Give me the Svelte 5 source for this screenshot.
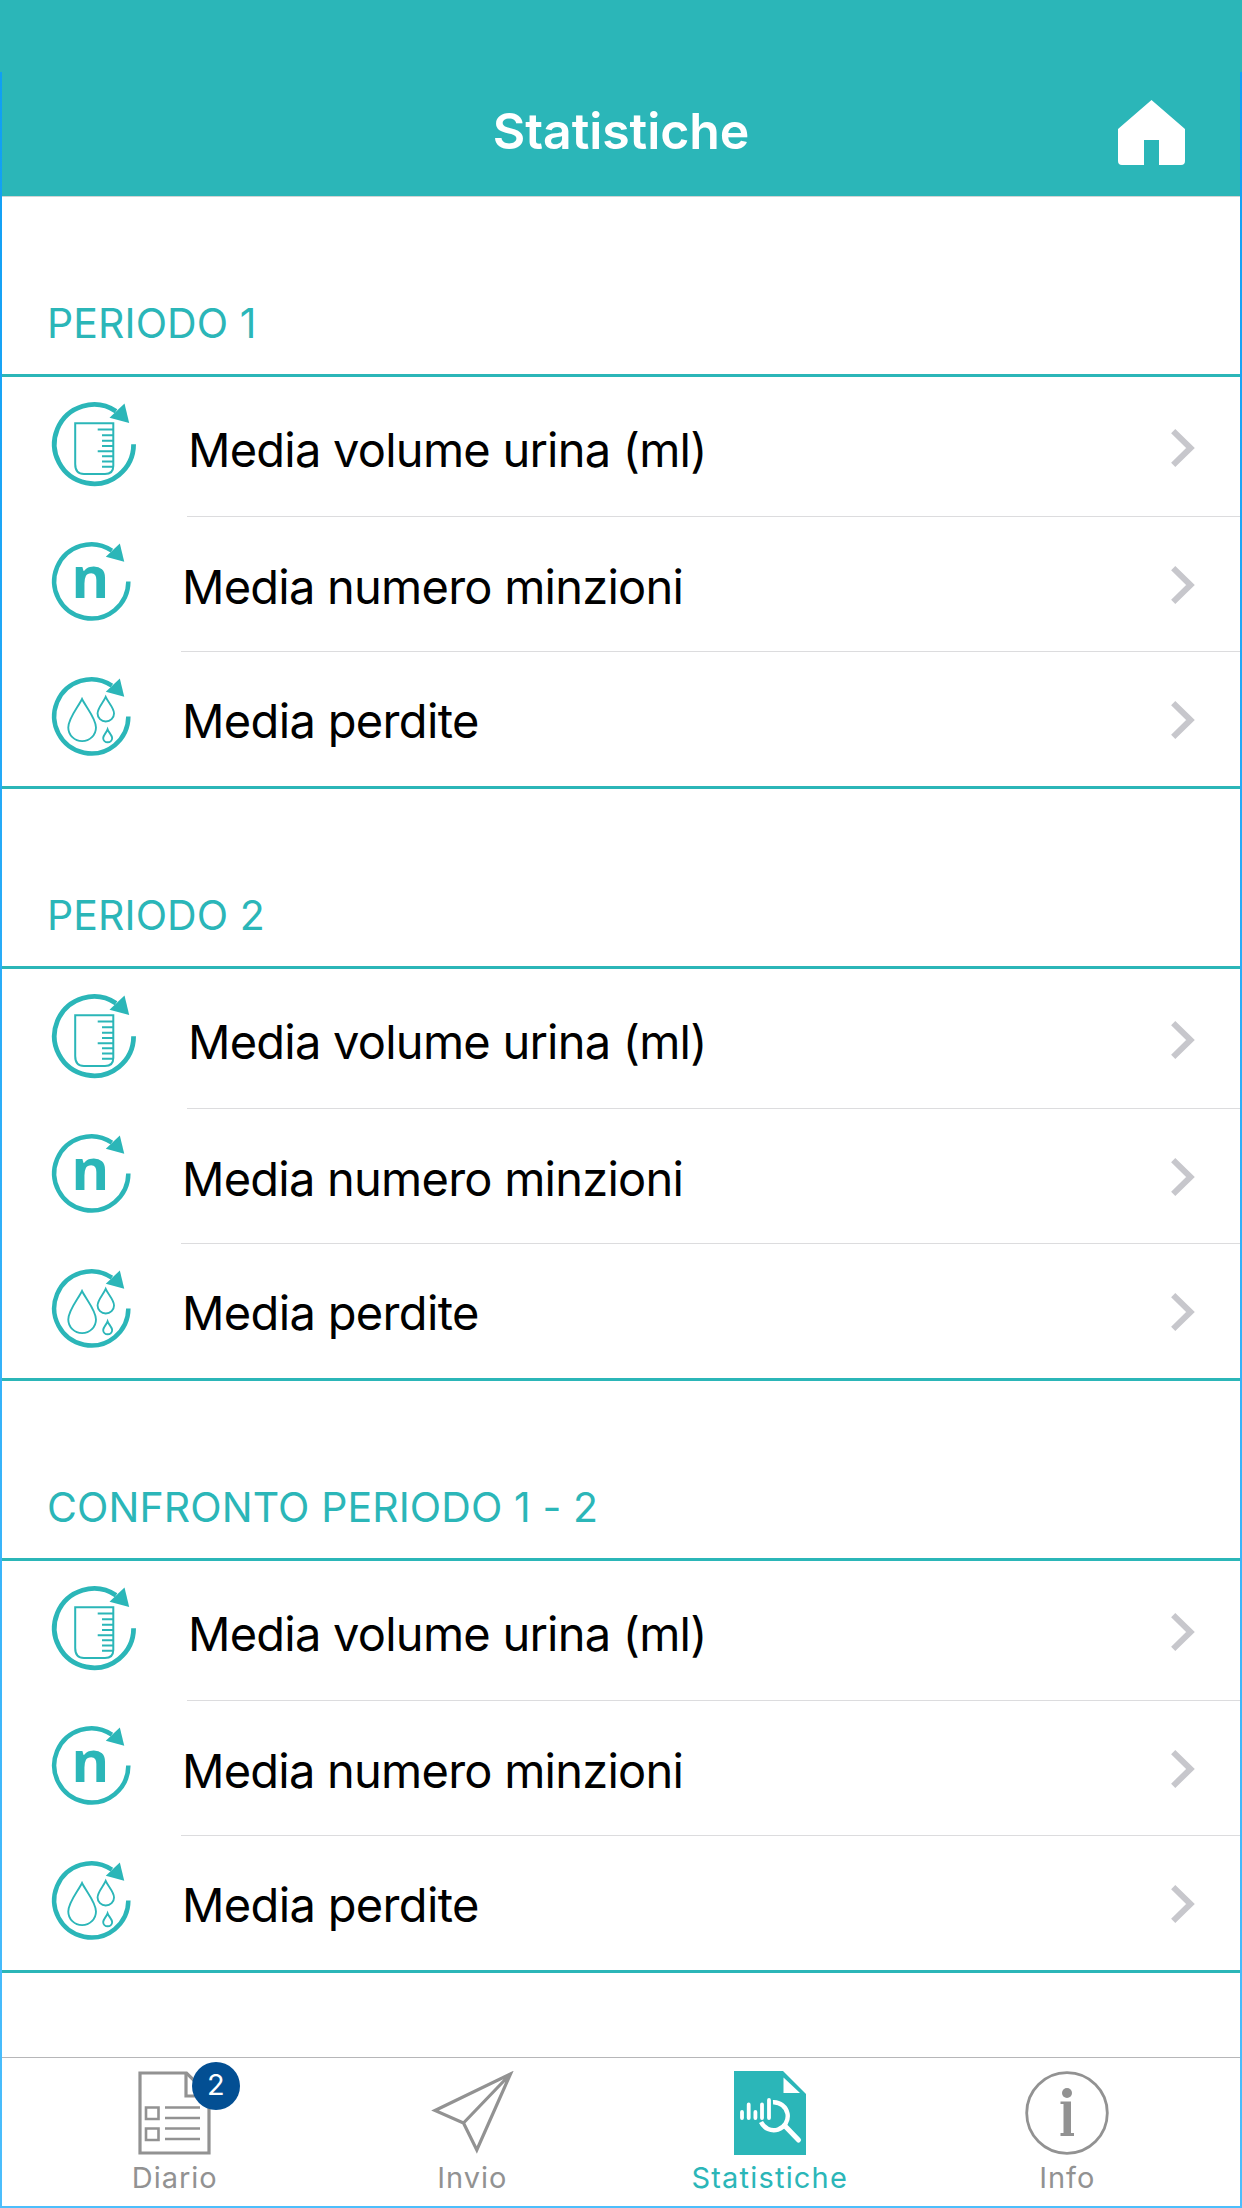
<script>
  const rows = [
    { icon: 'volume', label: 'Media volume urina (ml)' },
    { icon: 'number', label: 'Media numero minzioni' },
    { icon: 'drops', label: 'Media perdite' }
  ];

  const sections = ['PERIODO 1', 'PERIODO 2', 'CONFRONTO PERIODO 1 - 2'];

  const tabs = [
    { value: 'diario', label: 'Diario', badge: 2 },
    { value: 'invio', label: 'Invio' },
    { value: 'statistiche', label: 'Statistiche' },
    { value: 'info', label: 'Info' }
  ];

  let activeTab = $state('statistiche');
</script>

<div class="screen">
  <header>
    <h1>Statistiche</h1>
    <svg class="home" viewBox="0 0 67 65">
      <path d="M33.5 0 L67 29 V61 Q67 65 63 65 H41 V40 H26 V65 H4 Q0 65 0 61 V29 Z" fill="#fff" />
    </svg>
  </header>

  <main>
    {#each sections as title}
      <section>
        <h2>{title}</h2>
        <ul>
          {#each rows as row}
            <li class={row.icon}>
              <svg class="icon" viewBox="0 0 84 84">
                <path d="M81.6 42.3 A39.6 39.6 0 1 1 64 9.2" fill="none" stroke="#2bb6b8" stroke-width="4.8" />
                <path d="M72.5 1.5 L77.2 21 L57.5 15.8 Z" fill="#2bb6b8" />
                {#if row.icon === 'volume'}
                  <g fill="none" stroke="#2bb6b8" stroke-width="2">
                    <path d="M23.2 21.2 H61.3 V64 Q61.3 72 53 72 H32 Q23.2 72 23.2 62 Z" />
                    <path d="M45.7 27.6 H61 M50 33.3 H61 M50 38.7 H61 M50 44 H61 M45.7 49.3 H61 M50 54.3 H61 M50 59.5 H61 M50 64.7 H61" />
                  </g>
                {:else if row.icon === 'number'}
                  <text x="41" y="59.8" text-anchor="middle">n</text>
                {:else}
                  <g fill="none" stroke="#2bb6b8" stroke-width="2">
                    <path d="M32.1 23.5 C28 32 17.4 44 17.4 54 A14.8 14.6 0 0 0 47 54 C47 44 36.2 32 32.1 23.5 Z" />
                    <path d="M57.4 21.3 C55 27 48.7 33 48.7 39 A8.8 8.6 0 0 0 66.3 39 C66.3 33 59.8 27 57.4 21.3 Z" />
                    <path d="M59.4 56 C58.4 59 54.7 62.4 54.7 65.2 A4.8 4.6 0 0 0 64.3 65.2 C64.3 62.4 60.4 59 59.4 56 Z" />
                  </g>
                {/if}
              </svg>
              <div class="cell">
                <span>{row.label}</span>
                <svg class="chevron" viewBox="0 0 24 38">
                  <path d="M2.2 2.2 L19.5 19 L2.2 35.8" fill="none" stroke="#c7c7cc" stroke-width="6" />
                </svg>
              </div>
            </li>
          {/each}
        </ul>
      </section>
    {/each}
  </main>

  <nav>
    {#each tabs as tab}
      <button class:active={activeTab === tab.value} onclick={() => (activeTab = tab.value)}>
        <svg viewBox="0 0 84 84">
          {#if tab.value === 'diario'}
            <g fill="none" stroke="currentColor">
              <path d="M7 2 H53.5 L76 24 V82 H7 Z" stroke-width="3.2" />
              <path d="M53 2 V25 H76" stroke-width="3.2" />
              <path d="M13 36.5 H25.5 V48 H13 Z M13 57.5 H25.5 V69 H13 Z" stroke-width="2.6" />
              <path d="M32 36.5 H67 M32 47 H67 M32 57.5 H67 M32 68 H67" stroke-width="2.4" />
            </g>
          {:else if tab.value === 'invio'}
            <path d="M80.5 3 L5 39.5 L33.5 52 L46.8 79 Z M80.5 3 L33.5 52" fill="none" stroke="currentColor" stroke-width="3.2" />
          {:else if tab.value === 'statistiche'}
            <path d="M6 0 H55 L78 23 V84 H6 Z" fill="currentColor" />
            <path d="M55.5 6.5 V22 H72 Z" fill="#fff" />
            <g fill="none" stroke="#fff" stroke-linecap="round">
              <path d="M14 41 V47 M20.7 33.5 V47 M27.4 41 V47 M34 33.5 V47 M41 29 V47" stroke-width="3.8" />
              <path d="M45 31.2 A14 14 0 1 1 33 51" stroke-width="4.4" stroke-linecap="butt" />
              <path d="M57 55 L70.5 69" stroke-width="5" />
            </g>
          {:else}
            <circle cx="42" cy="42" r="40.3" fill="none" stroke="currentColor" stroke-width="2.8" />
            <circle cx="42" cy="22" r="5" fill="currentColor" />
            <path d="M35.5 30.5 H46 V62 H49 V65 H35.5 V62 H38.5 V33 H35.5 Z" fill="currentColor" />
          {/if}
        </svg>
        <span class="label">{tab.label}</span>
        {#if tab.badge}
          <span class="badge">{tab.badge}</span>
        {/if}
      </button>
    {/each}
  </nav>

  <div class="frame"></div>
</div>

<style>
  :global(body) {
    background: #fff;
  }

  .screen {
    position: relative;
    display: flex;
    flex-direction: column;
    width: 1242px;
    height: 2208px;
    overflow: hidden;
    background: #fff;
    font-family: Inter, "Noto Sans", sans-serif;
  }

  header {
    display: grid;
    grid-template-columns: 1fr auto 1fr;
    align-items: center;
    box-sizing: border-box;
    height: 197px;
    padding: 68px 57px 0;
    background: #2bb6b8;
    border-bottom: 1px solid #d0d4d4;
  }

  h1 {
    grid-column: 2;
    margin: 0 0 2px;
    color: #fff;
    font-size: 50px;
    font-weight: 600;
    line-height: 60px;
    letter-spacing: -0.1px;
  }

  .home {
    justify-self: end;
    width: 67px;
    height: 65px;
    margin-right: 0.5px;
  }

  main {
    flex: 1;
  }

  section {
    height: 592px;
  }

  h2 {
    box-sizing: border-box;
    height: 177px;
    margin: 0;
    padding: 101px 0 0 47px;
    color: #2bb6b8;
    font-size: 41px;
    font-weight: 400;
    line-height: 50px;
    letter-spacing: 0.1px;
    white-space: nowrap;
  }

  ul {
    margin: 0;
    padding: 0;
    list-style: none;
    border-top: 3px solid #2bb6b8;
    border-bottom: 3px solid #2bb6b8;
  }

  li {
    display: flex;
    height: 135px;
    padding-left: 52px;
  }

  li.volume {
    height: 140px;
  }

  li.drops {
    height: 134px;
  }

  .icon {
    width: 78.6px;
    height: 78.6px;
    margin: 25px 50.4px 0 0;
    overflow: visible;
  }

  .volume .icon {
    width: 84px;
    height: 84px;
    margin: 25px 51px 0 0;
  }

  .icon text {
    fill: #2bb6b8;
    font: 700 62px "Open Sans", sans-serif;
  }

  .cell {
    flex: 1;
    display: flex;
    align-items: center;
    justify-content: space-between;
    box-sizing: border-box;
    padding: 2px 47px 0 1px;
    border-bottom: 1px solid #dcdcde;
    color: #000;
    font-size: 47px;
    letter-spacing: -0.76px;
    white-space: nowrap;
  }

  .volume .cell {
    padding-top: 3px;
  }

  .cell span {
    padding-top: 2px;
  }

  .drops .cell {
    padding-top: 1px;
    border-bottom: none;
    letter-spacing: -0.65px;
  }

  .chevron {
    width: 24px;
    height: 38px;
  }

  nav {
    display: flex;
    box-sizing: border-box;
    height: 151px;
    padding: 0 26px;
    border-top: 1px solid #b6b6b8;
  }

  button {
    position: relative;
    flex: 1;
    display: flex;
    flex-direction: column;
    align-items: center;
    padding: 13px 0 0;
    border: none;
    background: none;
    color: #929292;
    font: 400 29px/36px Inter, "Noto Sans", sans-serif;
    letter-spacing: 1px;
    cursor: pointer;
  }

  button.active {
    color: #2bb6b8;
    letter-spacing: 1.2px;
  }

  button svg {
    width: 84px;
    height: 84px;
  }

  .label {
    margin-top: 5px;
  }

  .badge {
    position: absolute;
    top: 4px;
    left: calc(50% + 17px);
    width: 48px;
    height: 48px;
    border-radius: 50%;
    background: #034f93;
    color: #fff;
    font-size: 29px;
    line-height: 46px;
    letter-spacing: 0;
    text-align: center;
  }

  .frame {
    position: absolute;
    inset: 72px 0 0;
    border: 2px solid;
    border-top: none;
    border-image: linear-gradient(#109ff4, #4cbefc) 2;
    pointer-events: none;
  }
</style>
